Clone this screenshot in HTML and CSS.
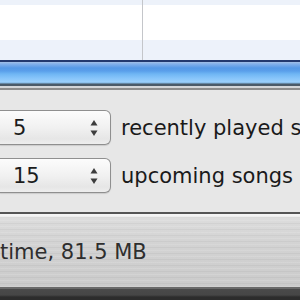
FILE: index.html
```html
<!DOCTYPE html>
<html lang="en">
<head>
  <meta charset="UTF-8" />
  <title>Party Shuffle</title>
  <link rel="stylesheet" href="styles.css">
</head>
<body>
  <div class="window">
    <div class="list">
      <div class="row alt short"><div class="cell"></div><div class="cell"></div></div>
      <div class="row tall"><div class="cell"></div><div class="cell"></div></div>
      <div class="row alt mid"><div class="cell"></div><div class="cell"></div></div>
    </div>
    <div class="shuffle-bar"></div>
    <div class="panel">
      <div class="option">
        <div class="popup">
          <span class="value">5</span>
          <svg class="arrows" width="8" height="18" viewBox="0 0 8 18">
            <path d="M4 1 L7.5 6.5 L0.5 6.5 Z" fill="#3d3d3d"/>
            <path d="M4 17 L7.5 11.5 L0.5 11.5 Z" fill="#3d3d3d"/>
          </svg>
        </div>
        <span class="label">recently played songs</span>
      </div>
      <div class="option">
        <div class="popup">
          <span class="value">15</span>
          <svg class="arrows" width="8" height="18" viewBox="0 0 8 18">
            <path d="M4 1 L7.5 6.5 L0.5 6.5 Z" fill="#3d3d3d"/>
            <path d="M4 17 L7.5 11.5 L0.5 11.5 Z" fill="#3d3d3d"/>
          </svg>
        </div>
        <span class="label">upcoming songs</span>
      </div>
    </div>
    <div class="status">
      <span class="status-text">time, 81.5 MB</span>
    </div>
    <div class="bottom"></div>
  </div>
</body>
</html>
```

FILE: styles.css
```css
html, body {
  margin: 0;
  height: 100%;
}
body {
  width: 300px;
  height: 300px;
  overflow: hidden;
  font-family: "DejaVu Sans", "Liberation Sans", sans-serif;
  background: #2c2c2c;
}
.window {
  display: flex;
  flex-direction: column;
  width: 300px;
  height: 300px;
  overflow: hidden;
}
.list {
  height: 60px;
  display: flex;
  flex-direction: column;
}
.row {
  display: flex;
  background: #ffffff;
}
.row.alt {
  background: #edf2fa;
}
.row.short { height: 5px; }
.row.tall { height: 35px; }
.row.mid { height: 20px; }
.cell {
  flex: 1;
}
.cell:first-child {
  flex: none;
  width: 142px;
  border-right: 1px solid #c4c6ca;
}
.shuffle-bar {
  height: 30px;
  flex: none;
  background: linear-gradient(to bottom,
    #23386e 0, #23386e 2px,
    #a3bfe6 2px, #82afea 4px,
    #5598e6 8px, #5a9fea 11px,
    #6fb6f4 14px, #86c4fa 18px,
    #9acffb 22px, #7fb3de 23px,
    #4a5a68 24px, #4a5a68 26px,
    #d2d5d8 26px, #d2d5d8 28px,
    #8c8c8c 28px, #8c8c8c 30px);
}
.panel {
  height: 122px;
  flex: none;
  background: #e7e7e7;
  display: flex;
  flex-direction: column;
  gap: 11px;
  padding-top: 20px;
  box-sizing: border-box;
}
.option {
  display: flex;
  align-items: center;
  gap: 10px;
  overflow: hidden;
  padding-bottom: 2px;
}
.popup {
  flex: none;
  width: 111px;
  height: 35px;
  box-sizing: border-box;
  display: flex;
  align-items: center;
  justify-content: space-between;
  padding: 0 12px 0 13px;
  border: 1px solid #8f8f8f;
  border-left: none;
  border-radius: 0 6px 6px 0;
  background: linear-gradient(to bottom, #fcfcfc, #f1f1f1 50%, #e6e6e6 85%, #eeeeee);
  box-shadow: 0 1px 1px rgba(0, 0, 0, 0.12);
}
.value {
  font-size: 21px;
  color: #1c1c1c;
}
.arrows {
  display: block;
}
.label {
  font-size: 21px;
  color: #1a1a1a;
  white-space: nowrap;
  min-width: 0;
  overflow: hidden;
}
.status {
  height: 71px;
  flex: none;
  border-top: 2px solid #545454;
  display: flex;
  align-items: center;
  padding-top: 2px;
  box-sizing: content-box;
  background:
    repeating-linear-gradient(to bottom, rgba(255,255,255,0.12) 0 1px, rgba(0,0,0,0) 1px 3px, rgba(0,0,0,0.04) 3px 4px, rgba(0,0,0,0) 4px 6px),
    linear-gradient(to bottom, #f3f3f3 0, #f3f3f3 2px, #dcdcdc 4px, #d3d3d3 40%, #cbcbcb 100%);
}
.status-text {
  font-size: 21px;
  color: #2e2e2e;
  white-space: nowrap;
}
.bottom {
  flex: 1;
  background: linear-gradient(to bottom, #6a6a6a 0, #6a6a6a 2px, #4a4a4a 2px, #464646 8px, #2c2c2c 10px);
}
```
